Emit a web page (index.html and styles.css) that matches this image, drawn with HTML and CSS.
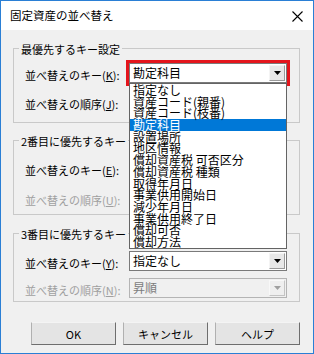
FILE: index.html
```html
<!DOCTYPE html>
<html lang="ja">
<head>
<meta charset="utf-8">
<title>固定資産の並べ替え</title>
<link rel="stylesheet" href="styles.css">
</head>
<body>
<div class="window">
  <div class="titlebar">
    <span class="title">固定資産の並べ替え</span>
    <svg class="close" width="11" height="11" viewBox="0 0 11 11"><path d="M0.5 0.5L10.5 10.5M10.5 0.5L0.5 10.5" stroke="#000" stroke-width="1.1"/></svg>
  </div>
  <div class="client">
    <div class="group g1">
      <div class="group-title">最優先するキー設定</div>
      <div class="rows">
        <span class="lbl">並べ替えのキー(<u>K</u>):</span>
        <div class="combo focus"><span class="val">勘定科目</span><span class="dd"><svg width="7" height="4" viewBox="0 0 7 4"><path d="M0 0H7L3.5 4Z" fill="#000"/></svg></span></div>
        <span class="lbl">並べ替えの順序(<u>J</u>):</span>
        <div class="combo"><span class="val">昇順</span><span class="dd"><svg width="7" height="4" viewBox="0 0 7 4"><path d="M0 0H7L3.5 4Z" fill="#000"/></svg></span></div>
      </div>
    </div>
    <div class="group g2">
      <div class="group-title">2番目に優先するキー</div>
      <div class="rows">
        <span class="lbl">並べ替えのキー(<u>E</u>):</span>
        <div class="combo"><span class="val">指定なし</span><span class="dd"><svg width="7" height="4" viewBox="0 0 7 4"><path d="M0 0H7L3.5 4Z" fill="#000"/></svg></span></div>
        <span class="lbl off">並べ替えの順序(<u>U</u>):</span>
        <div class="combo disabled"><span class="val">昇順</span><span class="dd"><svg width="7" height="4" viewBox="0 0 7 4"><path d="M0 0H7L3.5 4Z" fill="#a0a0a0"/></svg></span></div>
      </div>
    </div>
    <div class="group g3">
      <div class="group-title">3番目に優先するキー</div>
      <div class="rows">
        <span class="lbl">並べ替えのキー(<u>Y</u>):</span>
        <div class="combo"><span class="val">指定なし</span><span class="dd"><svg width="7" height="4" viewBox="0 0 7 4"><path d="M0 0H7L3.5 4Z" fill="#000"/></svg></span></div>
        <span class="lbl off">並べ替えの順序(<u>N</u>):</span>
        <div class="combo disabled"><span class="val">昇順</span><span class="dd"><svg width="7" height="4" viewBox="0 0 7 4"><path d="M0 0H7L3.5 4Z" fill="#a0a0a0"/></svg></span></div>
      </div>
    </div>
    <div class="buttons">
      <button class="btn">OK</button>
      <button class="btn">キャンセル</button>
      <button class="btn">ヘルプ</button>
    </div>
  </div>
  <ul class="droplist">
    <li>指定なし</li>
    <li>資産コード(親番)</li>
    <li>資産コード(枝番)</li>
    <li class="sel">勘定科目</li>
    <li>設置場所</li>
    <li>地区情報</li>
    <li>償却資産税 可否区分</li>
    <li>償却資産税 種類</li>
    <li>取得年月日</li>
    <li>事業供用開始日</li>
    <li>減少年月日</li>
    <li>事業供用終了日</li>
    <li>償却可否</li>
    <li>償却方法</li>
  </ul>
</div>
</body>
</html>
```
FILE: styles.css
```css
* { box-sizing: border-box; }
html, body { margin: 0; padding: 0; background: #fff; }
body {
  font-family: "Noto Sans CJK JP", "Noto Sans", sans-serif;
  font-size: 11px;
  color: #000;
}
.window {
  position: relative;
  width: 314px;
  height: 354px;
  border: 1px solid #2a7fd5;
  display: flex;
  flex-direction: column;
  background: #f0f0f0;
}
.titlebar {
  height: 29px;
  background: #fff;
  display: flex;
  align-items: center;
  justify-content: space-between;
  padding: 0 10px 0 9px;
}
.title { font-size: 11.5px; line-height: 14px; margin-top: -1px; }
.close { display: block; margin-top: 1px; }
.client {
  flex: 1;
  padding: 18px 13px 0 12px;
}
.group {
  border: 1px solid #c9c9c9;
  padding: 0 11px;
}
.group-title {
  width: max-content;
  margin: -7px 0 0 -6px;
  padding: 0 2px;
  line-height: 14px;
  background: #f0f0f0;
}
.rows {
  display: grid;
  grid-template-columns: 104px 158px;
  grid-auto-rows: 20px;
  align-items: center;
}
.g1 .rows { margin-top: 7px; row-gap: 9px; }
.g1 { padding-bottom: 10px; }
.g2 { margin-top: 17px; padding-bottom: 6px; }
.g2 .rows { margin-top: 10px; row-gap: 10px; }
.g3 { margin-top: 18px; padding-bottom: 3px; }
.g3 .rows { margin-top: 10px; row-gap: 7px; }
.lbl { line-height: 14px; padding-top: 3px; white-space: nowrap; }
.lbl.off { color: #a0a0a0; }
.combo {
  height: 20px;
  border: 1px solid #7a7a7a;
  background: #fff;
  display: flex;
  align-items: stretch;
  justify-content: space-between;
}
.combo.focus { outline: 3px solid #e4151c; }
.combo.disabled { border-color: #b4b4b4; background: #f0f0f0; color: #7c7c7c; }
.val { font-size: 12px; line-height: 18px; padding-left: 3px; }
.dd {
  width: 16px;
  margin: 1px;
  border: 1px solid;
  border-color: #f4f4f4 #9a9a9a #9a9a9a #f4f4f4;
  background: #e8e8e8;
  display: flex;
  align-items: center;
  justify-content: center;
}
.combo.disabled .dd { border-color: #f8f8f8 #c4c4c4 #c4c4c4 #f8f8f8; background: #efefef; }
.buttons {
  display: flex;
  gap: 7px;
  margin-top: 20px;
  padding-left: 18px;
}
.btn {
  width: 85px;
  height: 23px;
  font: inherit;
  font-size: 11px;
  color: #000;
  background: #e4e4e4;
  border: 1px solid;
  border-color: #f4f4f4 #6e6e6e #6e6e6e #b0b0b0;
  padding: 0;
}
.droplist {
  position: absolute;
  left: 128px;
  top: 82px;
  width: 158px;
  margin: 0;
  padding: 0;
  list-style: none;
  background: #fff;
  border: 1px solid #646464;
}
.droplist li {
  height: 11.7px;
  line-height: 11.7px;
  font-size: 12px;
  padding-left: 3px;
  white-space: nowrap;
}
.droplist li.sel { background: #0078d7; color: #fff; }
```
